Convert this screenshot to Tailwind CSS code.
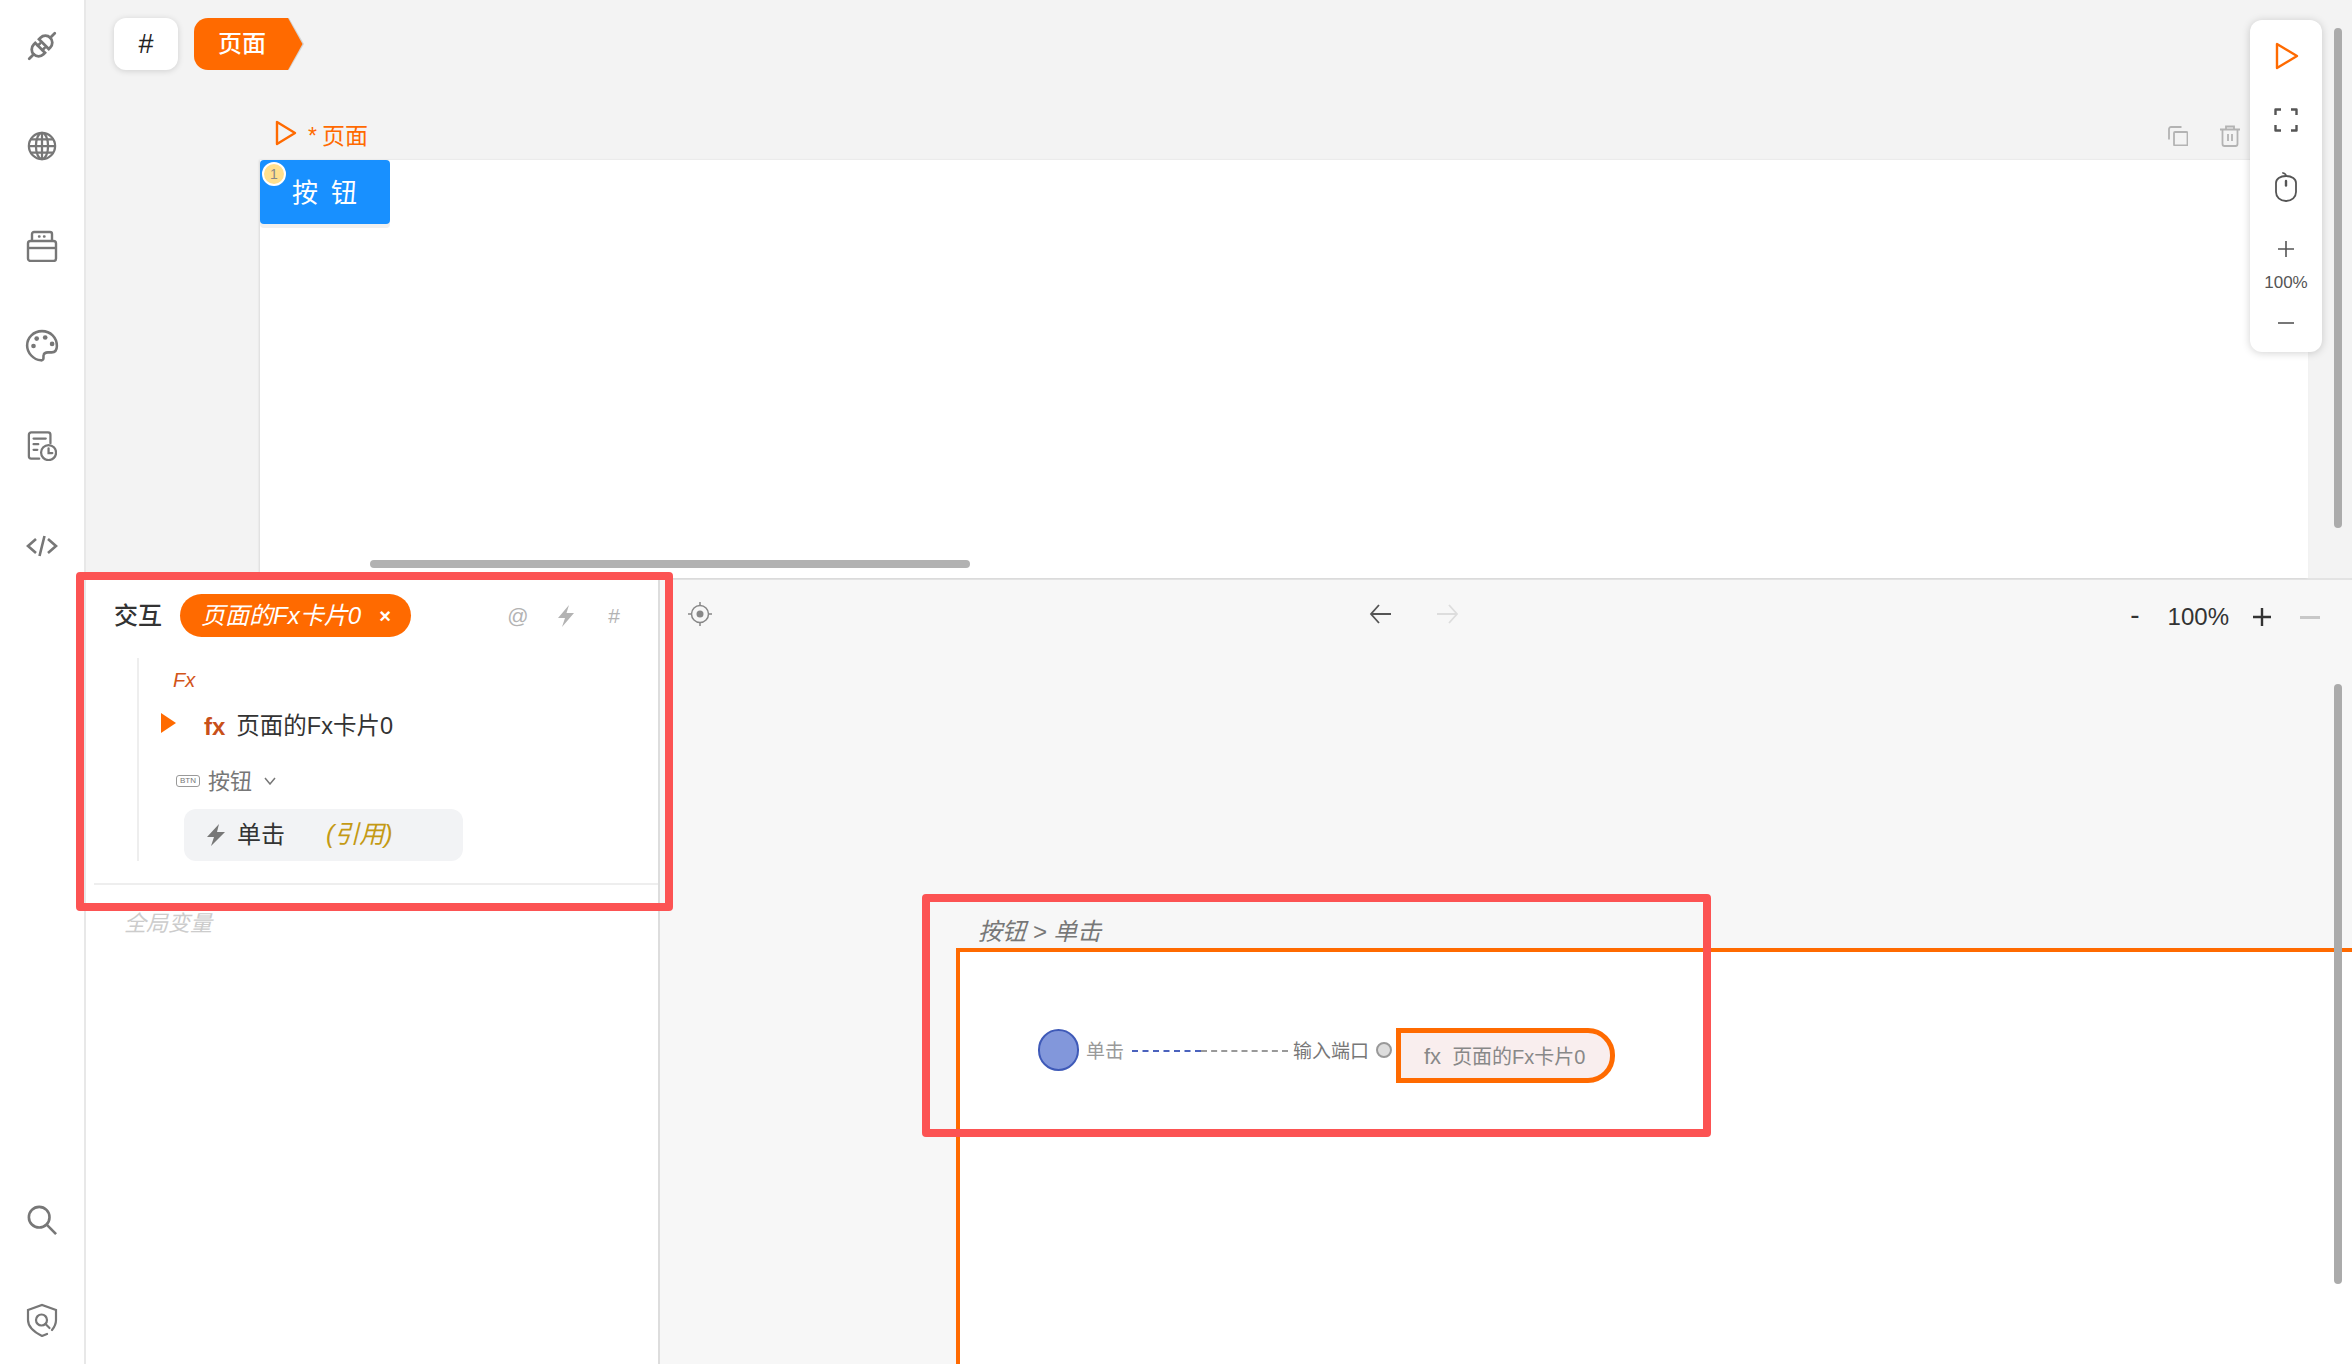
<!DOCTYPE html>
<html lang="zh-CN">
<head>
    <meta charset="UTF-8">
    <title>页面</title>
    <script src="https://cdn.jsdelivr.net/npm/@tailwindcss/browser@4"></script>
</head>
<body class="relative w-[2352px] h-[1364px] overflow-hidden flex bg-white font-['Liberation_Sans','Noto_Sans_CJK_SC',sans-serif]">

    <!-- Sidebar -->
    <aside class="w-[86px] h-full shrink-0 border-r-2 border-[#e8e8e8] flex flex-col items-center pt-[22px] pb-[20px] gap-[52px] text-[#777777]">
        <div class="h-12 flex items-center">
            <svg class="w-[34px] h-[34px]" viewBox="0 0 32 32" fill="none" stroke="currentColor" stroke-width="2.6" stroke-linecap="round"><g transform="rotate(-45 16 16)"><path d="M-1 16H5"/><path d="M13.500 9.500H11.500a6.500 6.500 0 0 0 0 13h2z"/><path d="M18.500 9.500h2a6.500 6.500 0 0 1 0 13h-2z"/><path d="M27 16h6"/><path d="M13.500 13h3M13.500 19h3"/></g></svg>
        </div>
        <div class="h-12 flex items-center">
            <svg class="w-[30px] h-[30px]" viewBox="0 0 32 32" fill="none" stroke="currentColor" stroke-width="2.4"><circle cx="16" cy="16" r="14"/><ellipse cx="16" cy="16" rx="6.500" ry="14"/><path d="M16 2v28M2 16h28M4 9h24M4 23h24"/></svg>
        </div>
        <div class="h-12 flex items-center">
            <svg class="w-[32px] h-[32px]" viewBox="0 0 32 32" fill="none" stroke="currentColor" stroke-width="2.400" stroke-linejoin="round"><path d="M6 11V4a2 2 0 0 1 2-2h16a2 2 0 0 1 2 2v7"/><rect x="2" y="11" width="28" height="20" rx="2.500"/><path d="M2 18h28"/><path d="M13 6.500h.5M18 6.500h.5" stroke-linecap="round"/></svg>
        </div>
        <div class="h-12 flex items-center">
            <svg class="w-[34px] h-[34px]" viewBox="0 0 32 32" fill="none" stroke="currentColor" stroke-width="2.400"><path d="M16 2C8 2 2 8 2 15.500 2 22.500 8 29 15 29.500c3.500.3 2-3.500 2.500-5 .5-2 2-2.500 4-2.500h3.500c3 0 5-2 5-6C30 8 24 2 16 2z"/><g fill="currentColor" stroke="none"><circle cx="8" cy="16" r="2.200"/><circle cx="11" cy="9" r="2.200"/><circle cx="19" cy="8" r="2.200"/><circle cx="25.500" cy="14" r="2.200"/></g></svg>
        </div>
        <div class="h-12 flex items-center">
            <svg class="w-[30px] h-[30px]" viewBox="0 0 32 32" fill="none" stroke="currentColor" stroke-width="2.400" stroke-linecap="round"><path d="M25 13V4a2.500 2.500 0 0 0-2.500-2.500h-18A2.500 2.500 0 0 0 2 4v23a2.500 2.500 0 0 0 2.500 2.500H13"/><path d="M7 8h13M7 14h5M7 20h4"/><circle cx="23" cy="23" r="8"/><path d="M23 18.500V23.500h4"/></svg>
        </div>
        <div class="h-12 flex items-center">
            <svg class="w-[32px] h-[32px]" viewBox="0 0 32 32" fill="none" stroke="currentColor" stroke-width="2.600"><path d="M10 9l-8 7 8 7M22 9l8 7-8 7M18.500 6l-5 20"/></svg>
        </div>
        <div class="h-12 flex items-center mt-auto">
            <svg class="w-[30px] h-[30px]" viewBox="0 0 32 32" fill="none" stroke="currentColor" stroke-width="2.800"><circle cx="13" cy="13" r="11"/><path d="M21 21l10 10"/></svg>
        </div>
        <div class="h-12 flex items-center">
            <svg class="w-[32px] h-[34px]" viewBox="0 0 32 34" fill="none" stroke="currentColor" stroke-width="2.200" stroke-linecap="round"><path d="M21 31l-5 2C8 29 2 24 2 17V7l14-5 14 5v10c0 4-1.500 7-4 10"/><circle cx="15.500" cy="17" r="5.500"/><path d="M19.500 21l4 4"/></svg>
        </div>
    </aside>

    <main class="flex-1 flex flex-col min-w-0">
        <!-- Page editor -->
        <section class="relative h-[578px] shrink-0 bg-[#f3f3f3]">
            <div class="pt-[18px] pl-[28px] flex gap-4">
                <div class="w-16 h-[52px] rounded-xl bg-white shadow-[0_1px_6px_rgba(0,0,0,0.15)] flex items-center justify-center text-[27px] font-medium text-[#222222]">#</div>
                <div class="flex h-[52px]">
                    <div class="w-[94px] bg-[#ff6a00] rounded-l-[14px] flex items-center justify-center pl-[2px] text-[24px] font-medium text-white">页面</div>
                    <svg class="w-[16px] h-[52px]" viewBox="0 0 16 52"><path d="M0 0h1l15 26L1 52H0z" fill="#d4d4d4"/><path d="M0 0l14.500 26L0 52z" fill="#ff6a00"/></svg>
                </div>
            </div>
            <div class="h-10 mt-[46px] pl-[189px] pr-[112px] flex items-center">
                <svg class="w-[22px] h-[28px] -mt-[6px]" viewBox="0 0 22 28" fill="none" stroke="#ff6a00" stroke-width="2.400" stroke-linejoin="round"><path d="M2 3v22l18-11z"/></svg>
                <span class="ml-[11px] text-[23px] text-[#ff6a00]">*</span>
                <span class="ml-[5px] text-[23px] text-[#ff6a00]">页面</span>
                <div class="ml-auto flex items-center gap-[32px] text-[#b3b3b3]">
                    <svg class="w-5 h-5" viewBox="0 0 20 20" fill="none" stroke="currentColor" stroke-width="1.800"><path d="M13.500 1H3a2 2 0 0 0-2 2v10.500"/><rect x="6" y="6" width="13.500" height="13.500" rx="1"/></svg>
                    <svg class="w-5 h-[22px]" viewBox="0 0 20 22" fill="none" stroke="currentColor" stroke-width="1.800"><path d="M0 4.500h20M6 4.500V1.500h8v3"/><path d="M2.500 4.500V19a2 2 0 0 0 2 2h11a2 2 0 0 0 2-2V4.500"/><path d="M8 9v7M12 9v7"/></svg>
                </div>
            </div>
            <div class="relative mt-[4px] ml-[174px] w-[2048px] h-[418px] bg-white shadow-[-1px_0_2px_rgba(0,0,0,0.1)]">
                <div class="relative w-[130px] h-16 bg-[#1890ff] rounded-[4px] shadow-[0_4px_0_#f0f0f0] flex items-center justify-center pt-[2px] text-[26px] tracking-[0.5em] pl-[12px] text-white">按钮
                    <span class="absolute left-[2px] top-[2px] w-6 h-6 rounded-full bg-[#ffe08e] border-2 border-white flex items-center justify-center text-[14px] tracking-normal text-[#888888]">1</span>
                </div>
                <div class="absolute left-[110px] top-[400px] w-[600px] h-2 rounded-full bg-[#b2b2b2]"></div>
            </div>

            <!-- Canvas tools -->
            <div class="absolute top-[20px] right-[30px] w-[72px] h-[332px] bg-white rounded-xl shadow-[0_1px_8px_rgba(0,0,0,0.18)] flex flex-col items-center pt-[22px] text-[#555555]">
                <svg class="w-[24px] h-[28px] ml-[2px]" viewBox="0 0 24 28" fill="none" stroke="#ff6a00" stroke-width="2.400" stroke-linejoin="round"><path d="M2 2v24l20-12z"/></svg>
                <svg class="w-[24px] h-[24px] mt-[38px]" viewBox="0 0 24 24" fill="none" stroke="currentColor" stroke-width="2.400" stroke-linejoin="round"><path d="M1.500 7V1.500H7M17 1.500h5.500V7M22.500 17v5.500H17M7 22.500H1.500V17"/></svg>
                <svg class="w-[22px] h-[30px] mt-[40px]" viewBox="0 0 22 30" fill="none" stroke="currentColor" stroke-width="1.800" stroke-linecap="round"><path d="M1 11c0-4 4-7 10-7s10 3 10 7v9c0 5-4 9-10 9s-10-4-10-9z"/><path d="M11 9v4.500" stroke-width="2.400"/><path d="M11 4C11 2.500 10 1.500 8 1"/></svg>
                <svg class="w-[16px] h-[16px] mt-[39px]" viewBox="0 0 16 16" stroke="currentColor" stroke-width="1.600"><path d="M8 0v16M0 8h16"/></svg>
                <span class="mt-[16px] text-[17px] leading-[20px] text-[#555555]">100%</span>
                <svg class="w-[16px] h-[2px] mt-[29px]" viewBox="0 0 16 2" stroke="#777777" stroke-width="2"><path d="M0 1h16"/></svg>
            </div>
            <div class="absolute top-[28px] right-[10px] w-2 h-[500px] rounded-full bg-[#ababab]"></div>
        </section>

        <section class="flex-1 flex border-t-2 border-[#e3e3e3] min-h-0">
            <!-- Interaction panel -->
            <div class="w-[574px] shrink-0 bg-white border-r-2 border-[#dddddd]">
                <div class="pt-[14px] pl-[28px] pr-[32px] flex items-center gap-[18px]">
                    <span class="text-[24px] font-medium text-[#333333]">交互</span>
                    <div class="w-[231px] h-[43px] rounded-full bg-[#ff6a00] flex items-center pl-[21px] pr-[20px] text-white">
                        <span class="text-[24px] italic whitespace-nowrap">页面的Fx卡片0</span>
                        <span class="ml-auto text-[20px] font-bold leading-none">×</span>
                    </div>
                    <div class="ml-auto flex items-center gap-[24px] text-[#b3b3b3]">
                        <span class="w-6 text-center text-[21px] leading-6">@</span>
                        <svg class="w-6 h-6" viewBox="0 0 24 24" fill="currentColor"><path d="M15 1L4 14h7l-3 9 12-14h-7.500z"/></svg>
                        <span class="w-6 text-center text-[21px] leading-6">#</span>
                    </div>
                </div>
                <div class="ml-[51px] mt-[21px] h-[203px] border-l-2 border-[#eeeeee] pt-[10px]">
                    <div class="pl-[34px] text-[20px] leading-6 italic text-[#d2551a]">Fx</div>
                    <div class="mt-[19px] h-8 pl-[22px] flex items-center">
                        <svg class="w-[15px] h-[20px] -mt-[9px]" viewBox="0 0 15 20" fill="#ff6a00"><path d="M0 0l15 10L0 20z"/></svg>
                        <span class="ml-[28px] text-[24px] font-bold text-[#c8501a]">fx</span>
                        <span class="ml-[11px] text-[23.5px] text-[#333333] whitespace-nowrap">页面的Fx卡片0</span>
                    </div>
                    <div class="mt-[24px] h-7 pl-[37px] flex items-center text-[#777777]">
                        <span class="w-6 h-[12px] rounded-[3px] border border-[#999999] flex items-center justify-center text-[8px] leading-none">BTN</span>
                        <span class="ml-2 text-[22px]">按钮</span>
                        <svg class="ml-3 w-3 h-2" viewBox="0 0 12 8" fill="none" stroke="currentColor" stroke-width="1.500"><path d="M1 1l5 6 5-6"/></svg>
                    </div>
                    <div class="mt-[14px] ml-[45px] w-[279px] h-[52px] rounded-xl bg-[#f2f3f5] flex items-center pl-[22px]">
                        <svg class="w-5 h-6" viewBox="0 0 20 24" fill="#777777"><path d="M13 1L1 14h7L5 23l14-14h-8z"/></svg>
                        <span class="ml-[11px] text-[24px] text-[#333333]">单击</span>
                        <span class="ml-[41px] text-[25px] italic text-[#c49a14]">(引用)</span>
                    </div>
                </div>
                <div class="mt-[22px] ml-[8px] h-[2px] bg-[#eeeeee]"></div>
                <div class="mt-[22px] pl-[38px] text-[22px] italic text-[#cccccc]">全局变量</div>
            </div>

            <!-- Logic canvas -->
            <div class="relative flex-1 bg-[#f7f7f7] min-w-0">
                <div class="h-[68px] pl-[28px] pr-[32px] flex items-center">
                    <svg class="w-6 h-6" viewBox="0 0 24 24" fill="none" stroke="#888888" stroke-width="1.500"><circle cx="12" cy="12" r="8.500"/><circle cx="12" cy="12" r="3.500" fill="#888888" stroke="none"/><path d="M12 0v3.500M12 20.500V24M0 12h3.500M20.500 12H24"/></svg>
                    <svg class="ml-[657px] w-[22px] h-[20px]" viewBox="0 0 22 20" fill="none" stroke="#555555" stroke-width="1.800"><path d="M22 10H2M10 1l-8 9 8 9"/></svg>
                    <svg class="ml-[46px] w-[22px] h-[20px]" viewBox="0 0 22 20" fill="none" stroke="#dddddd" stroke-width="1.800"><path d="M0 10h20M12 1l8 9-8 9"/></svg>
                    <div class="ml-auto mt-[6px] flex items-center text-[#333333]">
                        <span class="text-[28px] font-medium leading-none -mt-[4px]">-</span>
                        <span class="ml-[28px] text-[24px] leading-none">100%</span>
                        <svg class="ml-[24px] w-[18px] h-[18px]" viewBox="0 0 18 18" stroke="#333333" stroke-width="2.400"><path d="M9 0v18M0 9h18"/></svg>
                        <svg class="ml-[29px] w-5 h-[3px]" viewBox="0 0 20 3" stroke="#c8c8c8" stroke-width="3"><path d="M0 1.500h20"/></svg>
                    </div>
                </div>
                <div class="absolute left-[318px] top-[337px] text-[24px] leading-[30px] italic text-[#777777] whitespace-nowrap">按钮 &gt; 单击</div>

                <div class="absolute left-[296px] top-[368px] right-0 bottom-0 bg-white border-l-4 border-t-4 border-[#ff6a00]">
                    <div class="absolute left-[78px] top-[77px] w-[41px] h-[42px] rounded-full bg-[#8297db] border-2 border-[#3f5ab8]"></div>
                    <span class="absolute left-[126px] top-[87px] text-[19px] leading-[26px] text-[#999999]">单击</span>
                    <div class="absolute left-[172px] top-[98px] w-[69px] border-t-2 border-dashed border-[#4a62bd]"></div>
                    <div class="absolute left-[241px] top-[98px] w-[87px] border-t-2 border-dashed border-[#999999]"></div>
                    <span class="absolute left-[333px] top-[87px] text-[19px] leading-[26px] text-[#777777] whitespace-nowrap">输入端口</span>
                    <div class="absolute left-[416px] top-[90px] w-4 h-4 rounded-full bg-[#dddddd] border-2 border-[#999999]"></div>
                    <div class="absolute left-[436px] top-[76px] w-[219px] h-[55px] bg-[#f9eeee] border-[5px] border-[#ff6a00] rounded-r-[27px] flex items-center pl-[23px] pt-[2px] text-[#888888] whitespace-nowrap">
                        <span class="text-[22px]">fx</span><span class="ml-[11px] text-[20px]">页面的Fx卡片0</span>
                    </div>
                </div>
                <div class="absolute top-[104px] right-[10px] w-2 h-[600px] rounded-full bg-[#ababab]"></div>
            </div>
        </section>
    </main>

    <!-- Red annotation frames -->
    <div class="absolute left-[76px] top-[572px] w-[597px] h-[339px] border-8 border-[#fc5353] rounded-[4px]"></div>
    <div class="absolute left-[922px] top-[894px] w-[789px] h-[243px] border-8 border-[#fc5353] rounded-[4px]"></div>
</body>
</html>
